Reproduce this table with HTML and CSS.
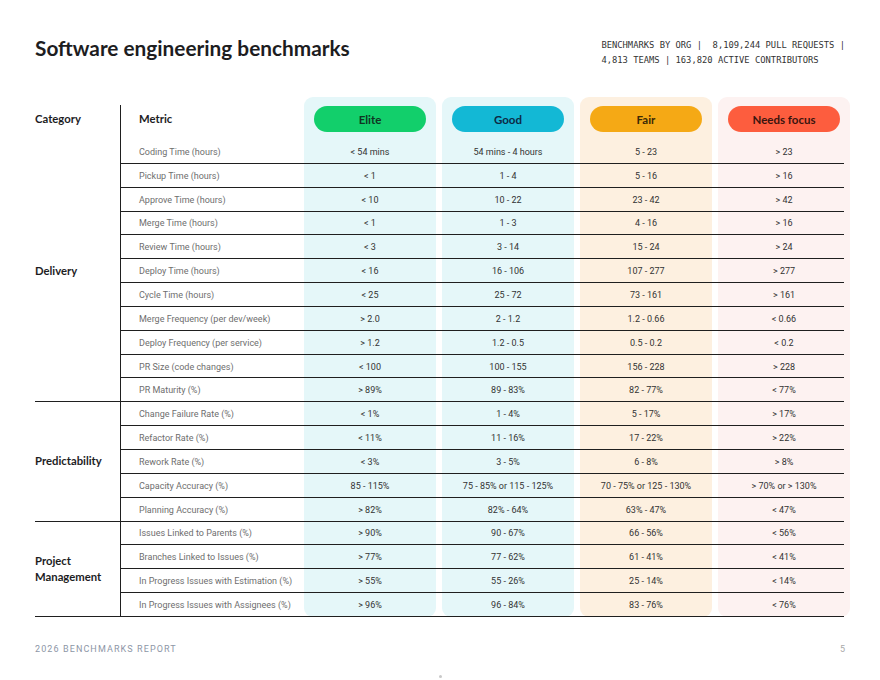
FILE: index.html
```html
<!DOCTYPE html>
<html lang="en">
<head>
<meta charset="utf-8">
<title>Software engineering benchmarks</title>
<link rel="stylesheet" href="styles.css">
</head>
<body>
<div class="page">
  <header class="top">
    <h1 class="title">Software engineering benchmarks</h1>
    <div class="meta">BENCHMARKS BY ORG |&nbsp; 8,109,244 PULL REQUESTS |<br>4,813 TEAMS | 163,820 ACTIVE CONTRIBUTORS</div>
  </header>

  <div class="table">
    <div class="card c-elite"></div>
    <div class="card c-good"></div>
    <div class="card c-fair"></div>
    <div class="card c-focus"></div>
    <div class="vline"></div>

    <div class="hcell cat-h">Category</div>
    <div class="hcell metric-h">Metric</div>
    <div class="pcell col1"><span class="pill p-elite">Elite</span></div>
    <div class="pcell col2"><span class="pill p-good">Good</span></div>
    <div class="pcell col3"><span class="pill p-fair">Fair</span></div>
    <div class="pcell col4"><span class="pill p-focus">Needs focus</span></div>

    <div class="cat cat-delivery">Delivery</div>
    <div class="cat cat-pred">Predictability</div>
    <div class="cat cat-pm">Project<br>Management</div>
  </div>
</div>
<div class="footer">
  <span class="foot-left">2026 BENCHMARKS REPORT</span>
  <span class="foot-right">5</span>
</div>
<div class="dot-wrap"><span class="dot"></span></div>
<script src="script.js"></script>
</body>
</html>
```

FILE: script.js
```js
(function () {
  var rows = [
    ["Coding Time (hours)", "< 54 mins", "54 mins - 4 hours", "5 - 23", "> 23"],
    ["Pickup Time (hours)", "< 1", "1 - 4", "5 - 16", "> 16"],
    ["Approve Time (hours)", "< 10", "10 - 22", "23 - 42", "> 42"],
    ["Merge Time (hours)", "< 1", "1 - 3", "4 - 16", "> 16"],
    ["Review Time (hours)", "< 3", "3 - 14", "15 - 24", "> 24"],
    ["Deploy Time (hours)", "< 16", "16 - 106", "107 - 277", "> 277"],
    ["Cycle Time (hours)", "< 25", "25 - 72", "73 - 161", "> 161"],
    ["Merge Frequency (per dev/week)", "> 2.0", "2 - 1.2", "1.2 - 0.66", "< 0.66"],
    ["Deploy Frequency (per service)", "> 1.2", "1.2 - 0.5", "0.5 - 0.2", "< 0.2"],
    ["PR Size (code changes)", "< 100", "100 - 155", "156 - 228", "> 228"],
    ["PR Maturity (%)", "> 89%", "89 - 83%", "82 - 77%", "< 77%"],
    ["Change Failure Rate (%)", "< 1%", "1 - 4%", "5 - 17%", "> 17%"],
    ["Refactor Rate (%)", "< 11%", "11 - 16%", "17 - 22%", "> 22%"],
    ["Rework Rate (%)", "< 3%", "3 - 5%", "6 - 8%", "> 8%"],
    ["Capacity Accuracy (%)", "85 - 115%", "75 - 85% or 115 - 125%", "70 - 75% or 125 - 130%", "> 70% or > 130%"],
    ["Planning Accuracy (%)", "> 82%", "82% - 64%", "63% - 47%", "< 47%"],
    ["Issues Linked to Parents (%)", "> 90%", "90 - 67%", "66 - 56%", "< 56%"],
    ["Branches Linked to Issues (%)", "> 77%", "77 - 62%", "61 - 41%", "< 41%"],
    ["In Progress Issues with Estimation (%)", "> 55%", "55 - 26%", "25 - 14%", "< 14%"],
    ["In Progress Issues with Assignees (%)", "> 96%", "96 - 84%", "83 - 76%", "< 76%"]
  ];
  var table = document.querySelector('.table');
  var cols = [2, 3, 5, 7, 9];
  rows.forEach(function (r, i) {
    var gr = i + 2;
    var line = document.createElement('div');
    line.className = 'rowline';
    line.style.gridRow = gr;
    table.appendChild(line);
    r.forEach(function (txt, j) {
      var c = document.createElement('div');
      c.className = j === 0 ? 'mcell' : 'dcell';
      c.style.gridRow = gr;
      c.style.gridColumn = cols[j];
      c.textContent = txt;
      table.appendChild(c);
    });
  });
})();
```

FILE: styles.css
```css
* { box-sizing: border-box; }
html, body { margin: 0; padding: 0; background: #ffffff; }
body {
  width: 880px;
  height: 680px;
  overflow: hidden;
  font-family: Roboto, "Liberation Sans", sans-serif;
  color: #222;
}
.page { padding: 0 35px 0 35px; }

.top {
  height: 97px;
  display: flex;
  justify-content: space-between;
  align-items: flex-start;
  padding-top: 36px;
}
.title {
  margin: 0;
  font-family: Lato, "Noto Sans", sans-serif;
  font-weight: 700;
  font-size: 20.8px;
  line-height: 24px;
  color: #1d1d1f;
}
.meta {
  font-family: "DejaVu Sans Mono", "Liberation Mono", monospace;
  font-size: 8.8px;
  line-height: 15px;
  color: #333;
  padding-top: 2px;
  white-space: nowrap;
}

.table {
  display: grid;
  grid-template-columns: 85px 184px 132px 6px 132px 6px 132px 6px 132px;
  grid-template-rows: 43px repeat(20, 23.85px);
}
.card {
  grid-row: 1 / -1;
  border-radius: 9px;
}
.c-elite { grid-column: 3; background: #e5f7f9; }
.c-good  { grid-column: 5; background: #e5f7f9; }
.c-fair  { grid-column: 7; background: #fdf0e0; }
.c-focus { grid-column: 9; background: #fdf2f1; }

.vline {
  grid-column: 2;
  grid-row: 1 / -1;
  margin-top: 8px;
  border-left: 1px solid #1f1f1f;
}

.hcell {
  grid-row: 1;
  display: flex;
  align-items: center;
  font-family: Lato, "Noto Sans", sans-serif;
  font-weight: 700;
  font-size: 11.3px;
  color: #1d1d1f;
}
.cat-h { grid-column: 1; }
.metric-h { grid-column: 2; padding-left: 19px; }

.pcell {
  grid-row: 1;
  display: flex;
  align-items: center;
  justify-content: center;
  padding-top: 1px;
}
.col1 { grid-column: 3; }
.col2 { grid-column: 5; }
.col3 { grid-column: 7; }
.col4 { grid-column: 9; }
.pill {
  width: 112px;
  height: 26px;
  border-radius: 13px;
  display: flex;
  align-items: center;
  justify-content: center;
  font-family: Lato, "Noto Sans", sans-serif;
  font-weight: 700;
  font-size: 11.5px;
}
.p-elite { background: #12cf6b; color: #0f3523; }
.p-good  { background: #13b8d5; color: #0d2a45; }
.p-fair  { background: #f5a915; color: #3b2a06; }
.p-focus { background: #fd5d3e; color: #3a150f; }

.cat {
  grid-column: 1;
  display: flex;
  align-items: center;
  border-bottom: 1px solid #1f1f1f;
  font-family: Lato, "Noto Sans", sans-serif;
  font-weight: 700;
  font-size: 11.3px;
  line-height: 16px;
  color: #1d1d1f;
}
.cat-delivery { grid-row: 2 / 13; }
.cat-pred { grid-row: 13 / 18; }
.cat-pm { grid-row: 18 / 22; }

.rowline {
  grid-column: 2 / -1;
  align-self: end;
  height: 1px;
  margin-right: 6px;
  background: #1f1f1f;
}
.mcell {
  display: flex;
  align-items: center;
  padding-left: 19px;
  font-size: 9px;
  color: #6e6e6e;
  white-space: nowrap;
}
.dcell {
  display: flex;
  align-items: center;
  justify-content: center;
  font-size: 9px;
  color: #333;
  white-space: nowrap;
}

.footer {
  display: flex;
  justify-content: space-between;
  padding: 0 35px;
  margin-top: 26px;
  font-size: 9px;
  line-height: 12px;
}
.foot-left { letter-spacing: 1.1px; color: #8d96a6; }
.foot-right { color: #a8a8a8; }
.dot-wrap {
  display: flex;
  justify-content: center;
  margin-top: 20px;
}
.dot {
  width: 3px;
  height: 3px;
  border-radius: 50%;
  background: #c9c9c9;
}
```
